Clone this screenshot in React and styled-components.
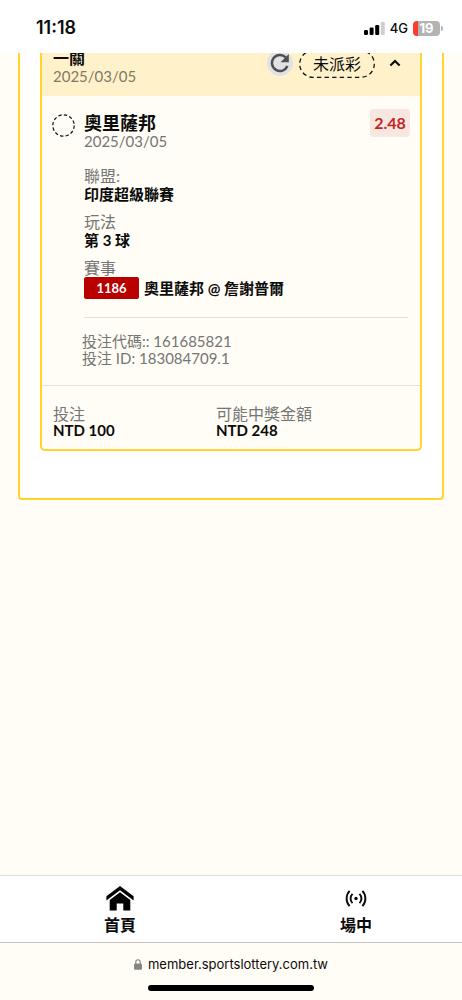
import React from "react";
import styled, { createGlobalStyle } from "styled-components";

const GlobalStyle = createGlobalStyle`
  * { box-sizing: border-box; }
  body {
    margin: 0;
    background: #fffdf5;
    color: #0b0b0b;
    font-family: Lato, "Noto Sans CJK TC", sans-serif;
    font-size: 16px;
  }
  button {
    padding: 0;
    border: 0;
    background: none;
    color: inherit;
    font: inherit;
    cursor: pointer;
  }
`;

const Screen = styled.div`
  display: flex;
  flex-direction: column;
  min-height: 100vh;
`;

const StatusBar = styled.header`
  display: flex;
  align-items: center;
  justify-content: space-between;
  height: 53px;
  padding: 3px 19px 0 36px;
  background: #fff;
  font-family: Inter, sans-serif;
`;

const Clock = styled.time`
  font-size: 18px;
  font-weight: 600;
  line-height: 20px;
`;

const StatusIcons = styled.div`
  display: flex;
  align-items: center;
  gap: 5px;
  font-size: 13px;
  font-weight: 500;
  line-height: 16px;
`;

const Battery = styled.div`
  display: flex;
  align-items: center;
  gap: 1px;
`;

const BatteryBody = styled.span`
  width: 27px;
  height: 15px;
  border-radius: 4px;
  background: linear-gradient(to right, #ff3b30 19%, #b3b3b3 19%);
  color: #fff;
  font-size: 13px;
  font-weight: 700;
  line-height: 15px;
  text-align: center;
`;

const BatteryCap = styled.span`
  width: 2px;
  height: 5px;
  border-radius: 0 2px 2px 0;
  background: #b3b3b3;
`;

const Content = styled.main`
  flex: 1;
  padding: 0 18px;
`;

const Panel = styled.section`
  padding: 0 20px 47px;
  border: 2px solid #ffd52b;
  border-top: 0;
  border-radius: 0 0 4px 4px;
  background: #fff;
`;

const Ticket = styled.article`
  overflow: hidden;
  border: 2px solid #ffd52b;
  border-top: 0;
  border-radius: 0 0 5px 5px;
  background: #fffdf5;
`;

const TicketHeader = styled.header`
  display: flex;
  align-items: flex-end;
  justify-content: space-between;
  height: 43px;
  padding: 0 11px 11px;
  overflow: hidden;
  background: #fff2cb;
`;

const Title = styled.h2`
  margin: 0;
  font-size: ${(p) => (p.$large ? "18px" : "16px")};
  font-weight: 700;
  line-height: 18px;
`;

const DateText = styled.time`
  display: block;
  color: ${(p) => (p.$onYellow ? "#7f7966" : "#757575")};
  font-size: 15px;
  line-height: 18px;
`;

const HeaderActions = styled.div`
  display: flex;
  align-items: flex-start;
  gap: 6px;
  padding-bottom: 7px;
`;

const RefreshButton = styled.button`
  display: grid;
  place-items: center;
  width: 26px;
  height: 26px;
  border-radius: 50%;
  background: #e2e2e4;
  color: #505052;
`;

const StatusPill = styled.span`
  position: relative;
  width: 76px;
  height: 28px;
  font-size: 16px;
  line-height: 28px;
  text-align: center;
`;

const PillOutline = styled.svg`
  position: absolute;
  inset: 0;
`;

const ToggleButton = styled.button`
  display: grid;
  place-items: center;
  width: 28px;
  height: 26px;
`;

const Selection = styled.section`
  display: grid;
  grid-template-columns: 23px 1fr;
  column-gap: 9px;
  padding: 18px 12px 18px 10px;
`;

const SelectionHead = styled.div`
  display: flex;
  justify-content: space-between;
  align-items: flex-start;
  height: 37px;
`;

const Odds = styled.strong`
  width: 40px;
  margin: -5px -2px 0 0;
  border-radius: 4px;
  background: #f8e7e1;
  color: #c0261f;
  font-size: 16px;
  line-height: 28px;
  text-align: center;
`;

const Details = styled.dl`
  display: grid;
  gap: 8px;
  margin: 15px 0 0;
  padding-bottom: 18px;
  border-bottom: 1px solid #e3e1da;
`;

const Label = styled.dt`
  color: #757575;
  font-size: 16px;
  font-weight: 400;
  line-height: ${(p) => (p.$tight ? "17px" : "19px")};
`;

const Value = styled.dd`
  display: flex;
  align-items: center;
  gap: 5px;
  margin: 0;
  font-size: 15px;
  font-weight: 700;
  line-height: ${(p) => (p.$tight ? "17px" : "19px")};
`;

const EventCode = styled.span`
  width: 55px;
  border-radius: 2px;
  background: #b90000;
  color: #fff;
  font-size: 13px;
  line-height: 22px;
  text-align: center;
`;

const Codes = styled.div`
  margin: 15px 0 0 -2px;
  color: #757575;
  font-size: 15px;
  line-height: 17px;
`;

const Amounts = styled.dl`
  display: grid;
  grid-template-columns: 163px 1fr;
  margin: 0;
  padding: 19px 11px 10px;
  border-top: 1px solid #e3e1da;
`;

const TabBar = styled.nav`
  display: flex;
  justify-content: space-between;
  padding: 10px 90px 7px 104px;
  border-top: 1px solid #dedede;
  border-bottom: 1px solid #c4c4c2;
  background: #fff;
`;

const TabLink = styled.a`
  display: flex;
  flex-direction: column;
  align-items: center;
  gap: 4px;
  color: #0b0b0b;
  font-size: 16px;
  font-weight: 700;
  line-height: 20px;
  text-decoration: none;
`;

const BrowserBar = styled.footer`
  display: flex;
  flex-direction: column;
  align-items: center;
  gap: 12px;
  padding: 12px 0 9px;
`;

const Address = styled.div`
  display: flex;
  align-items: center;
  gap: 6px;
  font-family: Inter, sans-serif;
  font-size: 13px;
  line-height: 18px;
`;

const HomeIndicator = styled.div`
  width: 36%;
  height: 6px;
  border-radius: 3px;
  background: #000;
`;

const SignalIcon = () => (
  <svg width="21" height="13" viewBox="0 0 21 13" aria-hidden="true">
    <rect x="0" y="8" width="4" height="5" rx="1.2" />
    <rect x="5.6" y="5.5" width="4" height="7.5" rx="1.2" />
    <rect x="11.2" y="3" width="4" height="10" rx="1.2" />
    <rect x="16.8" y="0" width="4" height="13" rx="1.2" fill="#cfcfcf" />
  </svg>
);

const RefreshIcon = () => (
  <svg width="20" height="20" viewBox="0 0 20 20" fill="none" aria-hidden="true">
    <path d="M17.4 13A8 8 0 1 1 15.7 4.4" stroke="currentColor" strokeWidth="2.5" />
    <path d="M18.8 1v8.2h-8.2z" fill="currentColor" />
  </svg>
);

const ChevronIcon = () => (
  <svg width="12" height="8" viewBox="0 0 12 8" fill="none" aria-hidden="true">
    <path d="M1.4 6.5 6 2l4.6 4.5" stroke="currentColor" strokeWidth="2.2" />
  </svg>
);

const PendingIcon = () => (
  <svg width="23" height="23" viewBox="0 0 23 23" fill="none" role="img" aria-label="未派彩">
    <circle cx="11.5" cy="11.5" r="10.7" stroke="#111" strokeWidth="1.2" strokeDasharray="3.4 2.2" />
  </svg>
);

const HomeIcon = () => (
  <svg width="28" height="25" viewBox="0 0 28 25" aria-hidden="true">
    <path d="M14 0 27.6 10.3v4.2L14 4.3.4 14.5v-4.2z" />
    <path d="M14 6.2 24.3 14v10.4h-7v-7h-6.6v7h-7V14z" />
  </svg>
);

const LiveIcon = () => (
  <svg width="22" height="25" viewBox="0 0 22 25" fill="none" stroke="#0b0b0b" strokeWidth="1.9" aria-hidden="true">
    <circle cx="11" cy="12.5" r="1.7" fill="#0b0b0b" stroke="none" />
    <path d="M7.5 7.8a6.7 6.7 0 0 0 0 9.4M14.5 7.8a6.7 6.7 0 0 1 0 9.4" />
    <path d="M4.6 4.8c-4 4.3-4 11.1 0 15.4M17.4 4.8c4 4.3 4 11.1 0 15.4" />
  </svg>
);

const LockIcon = () => (
  <svg width="8" height="11" viewBox="0 0 8 11" aria-hidden="true">
    <rect x="0" y="4.6" width="8" height="6.2" rx="1.2" fill="#858585" />
    <path d="M1.8 5V3a2.2 2.2 0 0 1 4.4 0v2" fill="none" stroke="#858585" strokeWidth="1.1" />
  </svg>
);

export default function App() {
  return (
    <>
      <GlobalStyle />
      <Screen>
        <StatusBar>
          <Clock>11:18</Clock>
          <StatusIcons>
            <SignalIcon />
            <span>4G</span>
            <Battery>
              <BatteryBody>19</BatteryBody>
              <BatteryCap />
            </Battery>
          </StatusIcons>
        </StatusBar>
        <Content>
          <Panel>
            <Ticket>
              <TicketHeader>
                <div>
                  <Title>一關</Title>
                  <DateText $onYellow>2025/03/05</DateText>
                </div>
                <HeaderActions>
                  <RefreshButton type="button" aria-label="重新整理">
                    <RefreshIcon />
                  </RefreshButton>
                  <StatusPill>
                    <PillOutline width="76" height="28" viewBox="0 0 76 28" fill="none" aria-hidden="true">
                      <rect x="0.7" y="0.7" width="74.6" height="26.6" rx="13.3" stroke="#111" strokeWidth="1.3" strokeDasharray="4.4 3.2" />
                    </PillOutline>
                    未派彩
                  </StatusPill>
                  <ToggleButton type="button" aria-label="收合" aria-expanded="true">
                    <ChevronIcon />
                  </ToggleButton>
                </HeaderActions>
              </TicketHeader>
              <Selection>
                <PendingIcon />
                <div>
                  <SelectionHead>
                    <div>
                      <Title $large>奧里薩邦</Title>
                      <DateText>2025/03/05</DateText>
                    </div>
                    <Odds>2.48</Odds>
                  </SelectionHead>
                  <Details>
                    <div>
                      <Label>聯盟:</Label>
                      <Value>印度超級聯賽</Value>
                    </div>
                    <div>
                      <Label>玩法</Label>
                      <Value>第 3 球</Value>
                    </div>
                    <div>
                      <Label>賽事</Label>
                      <Value>
                        <EventCode>1186</EventCode>
                        奧里薩邦 @ 詹謝普爾
                      </Value>
                    </div>
                  </Details>
                  <Codes>
                    <div>投注代碼:: 161685821</div>
                    <div>投注 ID: 183084709.1</div>
                  </Codes>
                </div>
              </Selection>
              <Amounts>
                <div>
                  <Label $tight>投注</Label>
                  <Value $tight>NTD 100</Value>
                </div>
                <div>
                  <Label $tight>可能中獎金額</Label>
                  <Value $tight>NTD 248</Value>
                </div>
              </Amounts>
            </Ticket>
          </Panel>
        </Content>
        <TabBar>
          <TabLink href="#home">
            <HomeIcon />
            首頁
          </TabLink>
          <TabLink href="#live">
            <LiveIcon />
            場中
          </TabLink>
        </TabBar>
        <BrowserBar>
          <Address>
            <LockIcon />
            member.sportslottery.com.tw
          </Address>
          <HomeIndicator />
        </BrowserBar>
      </Screen>
    </>
  );
}
